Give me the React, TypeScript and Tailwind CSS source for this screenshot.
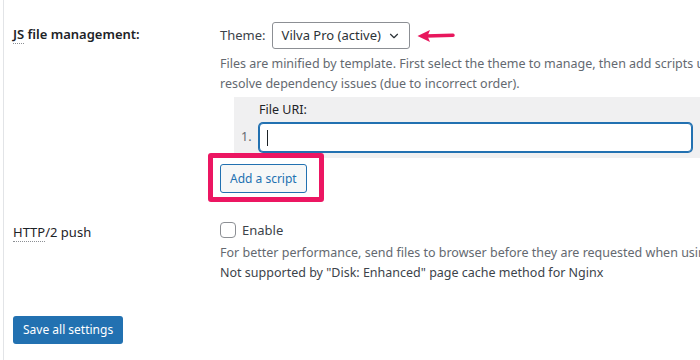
import { ChevronDown } from 'lucide-react';

export default function App() {
  return (
    <div className="w-[700px] h-[360px] bg-white overflow-hidden pl-[3px] font-['Noto_Sans',sans-serif] text-[12.5px] text-[#1d2327]">
      <div className="h-full border-l border-[#e2e4e7] pl-[9px]">
        {/* JS file management */}
        <div className="flex pt-[22px]">
          <div className="w-[207px] shrink-0 pt-[2px] font-semibold leading-[20px] text-[13px]">
            <abbr className="no-underline border-b border-dotted border-[#8c8f94]">JS</abbr> file management:
          </div>
          <div className="flex-1 min-w-0">
            <div className="flex items-center">
              <span className="text-[#3c434a] mr-[6px] text-[13px]">Theme:</span>
              <div className="w-[138px] h-[27px] border border-[#8c8f94] rounded-[3px] flex items-center justify-between pl-[9px] pr-[8px] text-[#2c3338] text-[13px]">
                <span>Vilva Pro (active)</span>
                <ChevronDown className="w-[14px] h-[14px]" strokeWidth={2} />
              </div>
              <svg width="38" height="14" viewBox="0 0 38 14" className="ml-[7px]">
                <path d="M9 7 L36 6.2" stroke="#e8175d" strokeWidth="3.5" strokeLinecap="round" />
                <path d="M0.5 7 L13 1 L10.5 7 L13 13 Z" fill="#e8175d" />
              </svg>
            </div>
            <p className="mt-[5px] leading-[20px] text-[#646970] whitespace-nowrap">
              Files are minified by template. First select the theme to manage, then add scripts using
              <br />
              resolve dependency issues (due to incorrect order).
            </p>
            <div className="ml-[14px] mt-[3px] bg-[#f0f0f1] pl-[7px] pt-[3px] pb-[6px] pr-[8px]">
              <div className="pl-[18px] leading-[20px] text-[#1d2327]">File URI:</div>
              <div className="flex items-center mt-[3px]">
                <span className="w-[18px] text-[#646970]">1.</span>
                <div className="flex-1 h-[29px] border border-[#2271b1] rounded-[4px] bg-white shadow-[0_0_0_1px_#2271b1] flex items-center pl-[7px]">
                  <span className="w-px h-[16px] bg-[#1d2327]" />
                </div>
              </div>
            </div>
            <div className="relative inline-block mt-[6px]">
              <div className="absolute -left-[12px] -right-[17px] -top-[11px] -bottom-[9px] border-[5px] border-[#ec1662] rounded-[3px]" />
              <button className="h-[29px] px-[9px] border border-[#2271b1] rounded-[3px] bg-[#f6f7f7] text-[#2271b1] text-[12px] leading-none">
                Add a script
              </button>
            </div>
          </div>
        </div>

        {/* HTTP/2 push */}
        <div className="flex mt-[27px]">
          <div className="w-[207px] shrink-0 leading-[20px] pt-[2px] text-[13px]">
            <abbr className="no-underline border-b border-dotted border-[#8c8f94]">HTTP</abbr>/2 push
          </div>
          <div className="flex-1 min-w-0">
            <label className="flex items-center leading-[20px]">
              <span className="w-[16px] h-[16px] border border-[#8c8f94] rounded-[4px] bg-white mr-[6px]" />
              <span className="text-[#3c434a] text-[13px]">Enable</span>
            </label>
            <p className="mt-[3px] leading-[20px] text-[#646970] whitespace-nowrap">
              For better performance, send files to browser before they are requested when using
            </p>
            <p className="leading-[20px] text-[#3c434a] whitespace-nowrap">
              Not supported by "Disk: Enhanced" page cache method for Nginx
            </p>
          </div>
        </div>

        <button className="mt-[33px] h-[28px] px-[10px] rounded-[3px] bg-[#2271b1] text-white text-[12px] leading-none">
          Save all settings
        </button>
      </div>
    </div>
  );
}
